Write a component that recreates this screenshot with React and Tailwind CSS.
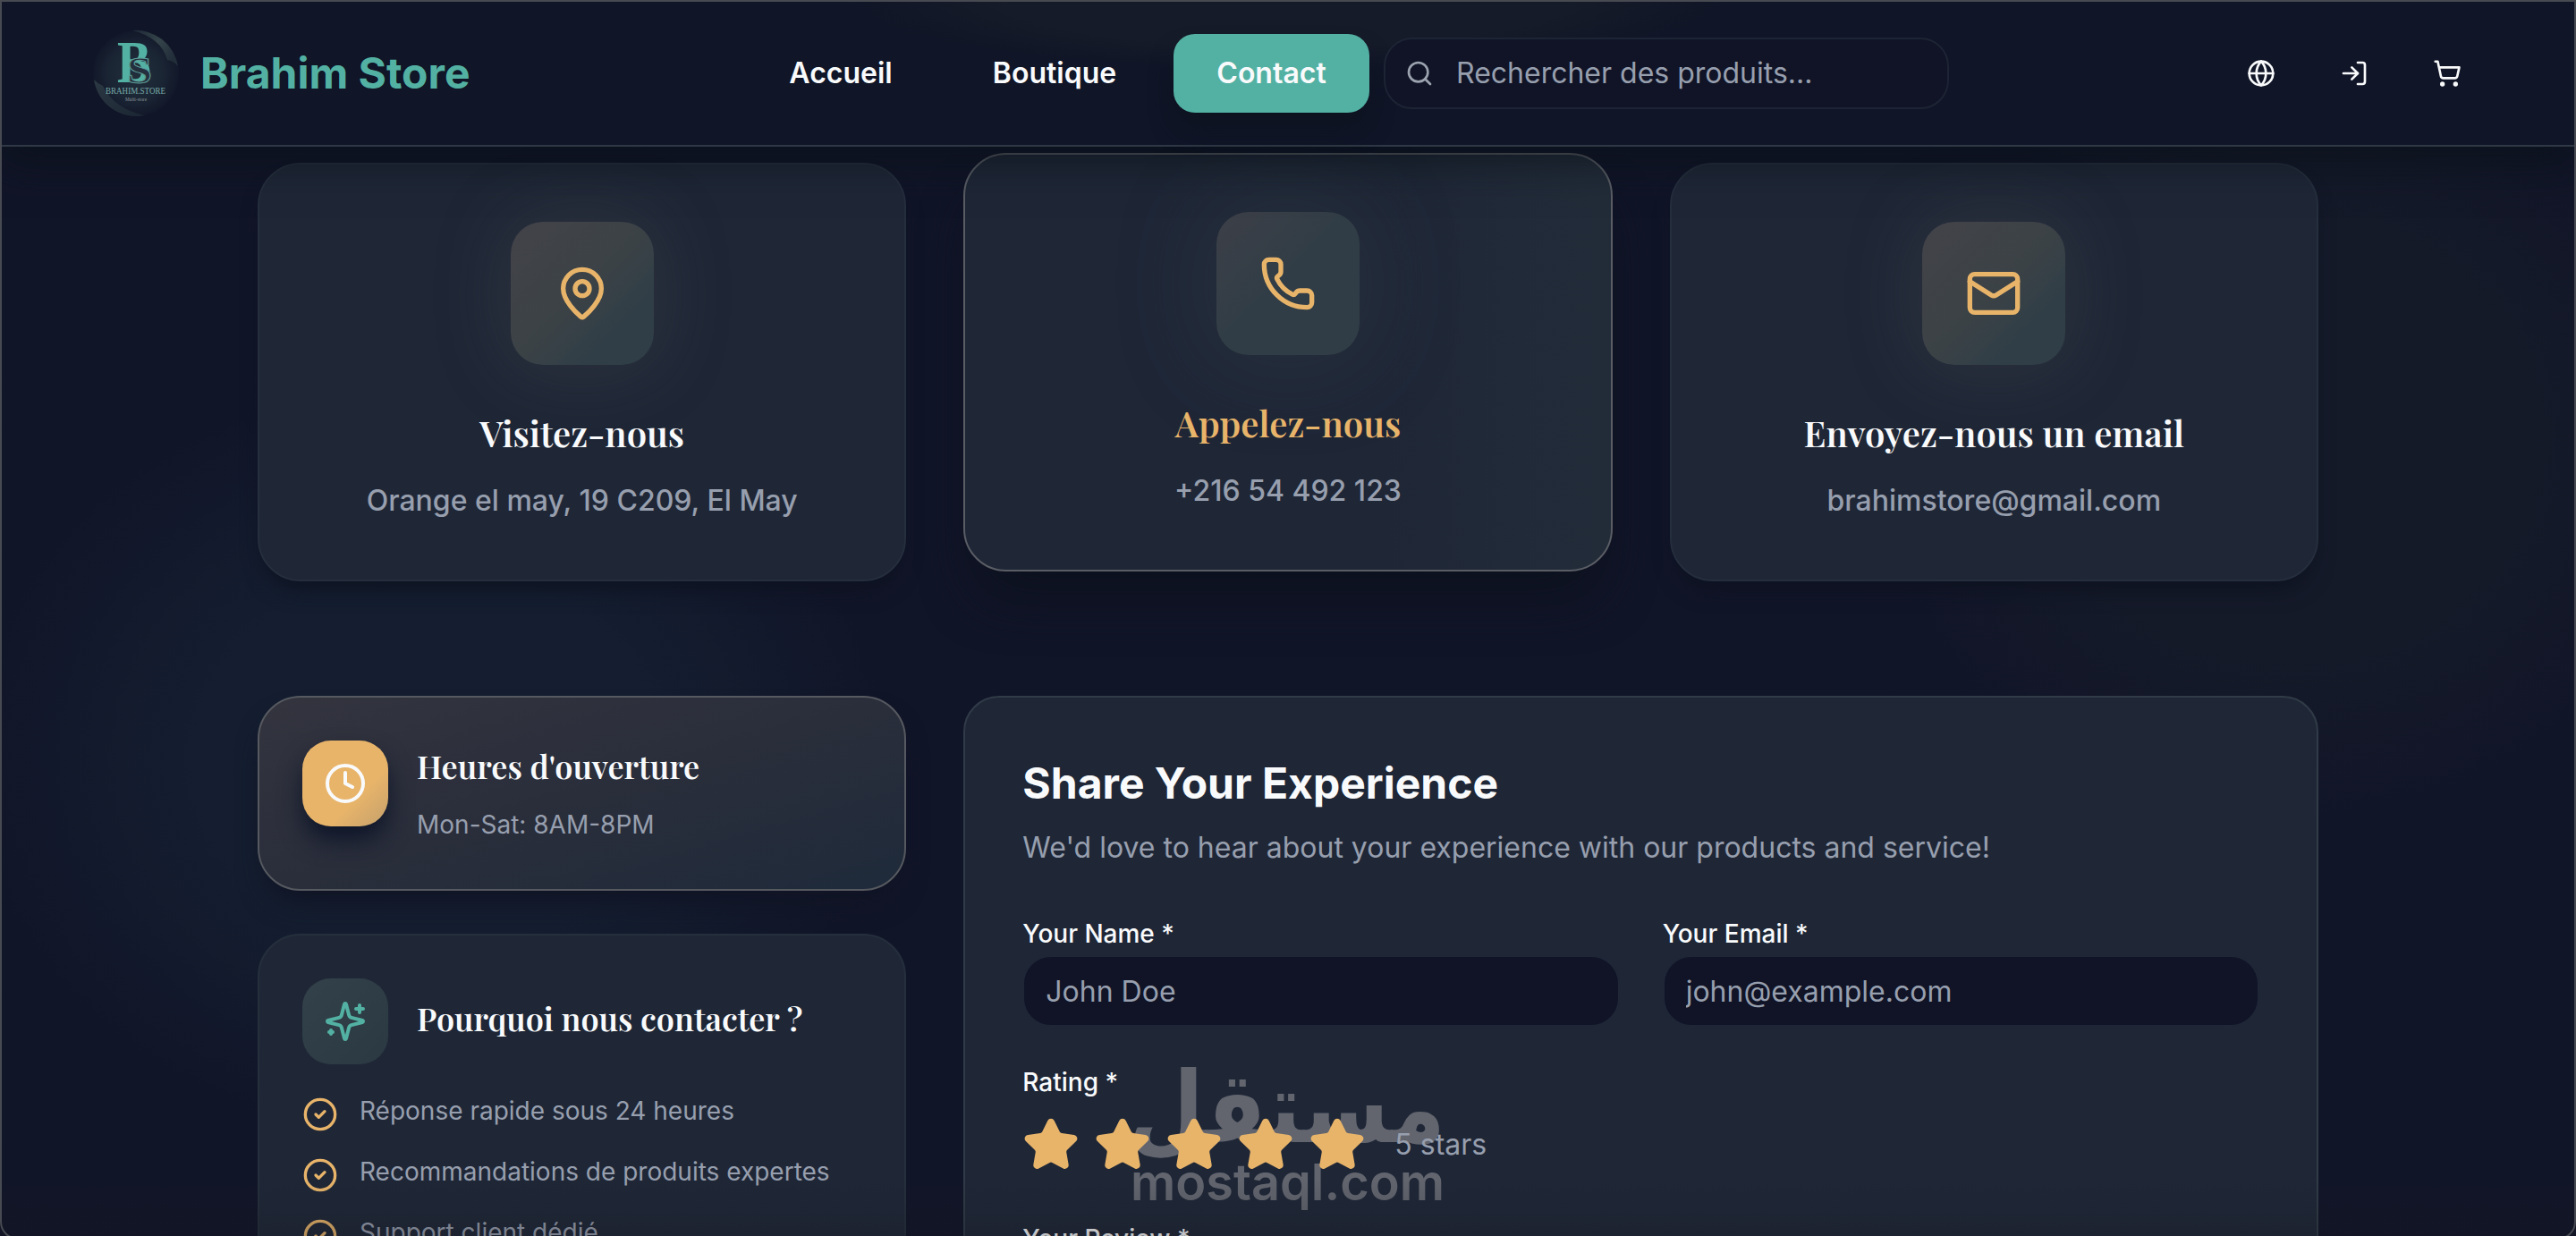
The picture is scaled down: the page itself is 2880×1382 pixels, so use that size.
import { useState } from "react";
import {
  Search,
  Globe,
  LogIn,
  ShoppingCart,
  MapPin,
  Phone,
  Mail,
  Clock,
  CircleCheck,
} from "lucide-react";

const contactCards = [
  { title: "Visitez-nous", text: "Orange el may, 19 C209, El May", icon: MapPin },
  { title: "Appelez-nous", text: "+216 54 492 123", icon: Phone, active: true },
  { title: "Envoyez-nous un email", text: "brahimstore@gmail.com", icon: Mail },
];

const reasons = [
  "Réponse rapide sous 24 heures",
  "Recommandations de produits expertes",
  "Support client dédié",
];

function Sparkles({ className }) {
  return (
    <svg
      viewBox="0 0 24 24"
      fill="none"
      stroke="currentColor"
      strokeWidth="2"
      strokeLinecap="round"
      strokeLinejoin="round"
      className={className}
    >
      <path d="M9.937 15.5A2 2 0 0 0 8.5 14.063l-6.135-1.582a.5.5 0 0 1 0-.962L8.5 9.936A2 2 0 0 0 9.937 8.5l1.582-6.135a.5.5 0 0 1 .963 0L14.063 8.5A2 2 0 0 0 15.5 9.937l6.135 1.581a.5.5 0 0 1 0 .964L15.5 14.063a2 2 0 0 0-1.437 1.437l-1.582 6.135a.5.5 0 0 1-.963 0z" />
      <path d="M20 3v4M22 5h-4M4 17v2M5 18H3" />
    </svg>
  );
}

function Logo() {
  return (
    <svg viewBox="0 0 96 96" className="size-24 overflow-visible">
      <defs>
        <radialGradient id="disc">
          <stop offset="0" stopColor="#222e3b" />
          <stop offset="0.6" stopColor="#1b2635" />
          <stop offset="1" stopColor="#121829" />
        </radialGradient>
        <linearGradient id="rimTop" x1="0" y1="0" x2="1" y2="0.6">
          <stop offset="0" stopColor="#1d2936" />
          <stop offset="0.55" stopColor="#34434a" />
          <stop offset="1" stopColor="#222e3a" />
        </linearGradient>
        <linearGradient id="rimBottom" x1="0" y1="0" x2="1" y2="1">
          <stop offset="0" stopColor="#2b3943" />
          <stop offset="1" stopColor="#1b2533" />
        </linearGradient>
      </defs>
      <circle cx="48" cy="48" r="48" fill="url(#disc)" />
      {/* light catching the rim */}
      <path d="M44 0A48 48 0 0 1 95 40Q90 34 83 33Q76 8 44 0Z" fill="url(#rimTop)" />
      <path d="M1 55A48 48 0 0 0 58 95Q24 88 11 62Q6 60 1 55Z" fill="url(#rimBottom)" />
      <text x="27" y="58" fontSize="67" fill="#53b1a3" textLength="38" lengthAdjust="spacingAndGlyphs" className="font-['Liberation_Serif',serif] font-bold">B</text>
      <text x="38" y="59" fontSize="42" fill="#24303d" stroke="#5c9c98" strokeWidth="1" textLength="28" lengthAdjust="spacingAndGlyphs" className="font-['Liberation_Serif',serif] font-bold">S</text>
      <text x="14" y="71" fontSize="10" fill="#78aaa8" textLength="67" lengthAdjust="spacingAndGlyphs" className="font-['Liberation_Serif',serif]">BRAHIM.STORE</text>
      <text x="36" y="79" fontSize="5.5" fill="#8d989d" textLength="24" lengthAdjust="spacingAndGlyphs" className="font-['Liberation_Serif',serif]">Multi-store</text>
    </svg>
  );
}

function Header() {
  return (
    <header className="relative z-20 h-[164px] border-b-2 border-[#2f3945] bg-[#101527] px-[104px] pt-0.5 shadow-[0_20px_40px_rgba(10,16,24,0.6)]">
      {/* soft glow under the top edge */}
      <div className="absolute left-[940px] top-0 h-20 w-[1000px] bg-radial-[at_50%_0%] from-[#161b29] from-45% to-[#101527] to-70%" />
      <div className="relative flex h-40 items-center">
        <Logo />
        <div className="ml-6 w-[610px] text-5xl font-bold text-[#53b1a3]">
          Brahim Store
        </div>
        <nav className="flex items-center gap-4 text-[32px] font-semibold leading-[48px] text-gray-50">
          <a className="w-[212px] py-5 text-center">Accueil</a>
          <a className="w-[234px] py-5 text-center">Boutique</a>
          <a className="w-[219px] rounded-3xl bg-[#53b1a3] py-5 text-center shadow-[0_20px_30px_-6px_#0d131e]">
            Contact
          </a>
        </nav>
        <div className="ml-4 flex h-20 w-[632px] items-center gap-6 rounded-[32px] border-2 border-[#1d2434] bg-[#101426] pl-[22px]">
          <Search className="size-8 text-[#9ca3af]" />
          <input
            className="ml-px w-[500px] bg-transparent text-[32px] outline-none placeholder:text-[#979fae]"
            placeholder="Rechercher des produits..."
          />
        </div>
        <div className="ml-auto flex gap-6 text-gray-50">
          <button className="grid size-20 place-items-center"><Globe className="size-8" /></button>
          <button className="grid size-20 place-items-center"><LogIn className="size-8" /></button>
          <button className="grid size-20 place-items-center"><ShoppingCart className="size-8" /></button>
        </div>
      </div>
    </header>
  );
}

function ContactCard({ card }) {
  const Icon = card.icon;
  return (
    <div
      className={`flex h-[468px] flex-col items-center rounded-[48px] border-2 pt-16 ${
        card.active
          ? "-translate-y-[11px] border-[#5a5d64] bg-linear-to-r from-[#1f2737] from-65% to-[#222c39] shadow-[0_40px_60px_-16px_#0c111d]"
          : "border-[#252e3d] bg-[#1f2737] shadow-[0_16px_24px_-8px_#0d1220]"
      }`}
    >
      <div
        className={`grid size-40 place-items-center rounded-[36px] ${
          card.active
            ? "bg-linear-to-br from-[#3d3f47] to-[#303d46] to-50% shadow-[0_0_100px_10px_rgba(60,75,80,0.28)]"
            : "bg-linear-to-br from-[#434349] via-[#3b4246] to-[#303e47] to-75% shadow-[0_0_80px_4px_rgba(78,78,76,0.32)]"
        }`}
      >
        <Icon className="size-16 text-[#e8b46a]" />
      </div>
      <h3
        className={`mt-12 font-['Playfair_Display','Liberation_Serif',serif] text-[40px] font-semibold leading-[56px] ${
          card.active ? "text-[#e8b46a]" : "text-gray-50"
        }`}
      >
        {card.title}
      </h3>
      <p className="mt-6 text-[32px] font-medium leading-[48px] text-[#979fae]">{card.text}</p>
    </div>
  );
}

function Field({ label, placeholder }) {
  return (
    <label className="block text-[28px] font-medium leading-10 text-gray-50">
      {label}
      <input
        placeholder={placeholder}
        className="mt-1 block h-20 w-full rounded-[32px] border-2 border-[#1f2737] bg-[#101426] px-6 text-[32px] font-normal outline-none placeholder:text-[#979fae]"
      />
    </label>
  );
}

function Watermark() {
  return (
    <svg
      viewBox="0 0 350 170"
      className="pointer-events-none absolute left-[186px] top-[410px] h-[170px] w-[350px] overflow-visible fill-[#62656e]"
    >
      <text x="351" y="87" fontSize="110" textLength="354" lengthAdjust="spacingAndGlyphs" direction="rtl" className="font-['DejaVu_Sans',sans-serif] font-bold">
        مستقل
      </text>
      <text x="-1" y="152" fontSize="56" textLength="351" lengthAdjust="spacingAndGlyphs" className="font-['Inter',sans-serif] font-semibold">
        mostaql.com
      </text>
    </svg>
  );
}

function ReviewForm() {
  const [rating, setRating] = useState(5);
  return (
    <div className="relative col-span-2 h-[760px] rounded-[40px] border-2 border-[#303b47] bg-[#1f2737] px-16 pt-16">
      <Watermark />
      <h2 className="text-5xl font-bold leading-[64px] text-gray-50">
        Share Your Experience
      </h2>
      <p className="mt-4 text-[32px] leading-[48px] text-[#979fae]">
        We'd love to hear about your experience with our products and service!
      </p>
      <div className="mt-[52px] grid grid-cols-2 gap-12">
        <Field label="Your Name *" placeholder="John Doe" />
        <Field label="Your Email *" placeholder="john@example.com" />
      </div>
      <div className="relative mt-[42px] text-[28px] font-medium leading-10 text-gray-50">Rating *</div>
      <div className="relative mt-[18px] flex items-center gap-4">
        {[1, 2, 3, 4, 5].map((star) => (
          <button key={star} onClick={() => setRating(star)}>
            <svg viewBox="0 0 24 24" className="size-16 fill-[#e8b46a] stroke-[#e8b46a] stroke-2" strokeLinejoin="round">
              <path d="M11.525 2.295a.53.53 0 0 1 .95 0l2.31 4.679a2.123 2.123 0 0 0 1.595 1.16l5.166.756a.53.53 0 0 1 .294.904l-3.736 3.638a2.123 2.123 0 0 0-.611 1.878l.882 5.14a.53.53 0 0 1-.771.56l-4.618-2.428a2.122 2.122 0 0 0-1.973 0L6.396 21.01a.53.53 0 0 1-.77-.56l.881-5.139a2.122 2.122 0 0 0-.611-1.879L2.16 9.795a.53.53 0 0 1 .294-.906l5.165-.755a2.122 2.122 0 0 0 1.597-1.16z" />
            </svg>
          </button>
        ))}
        <span className="ml-4 text-[32px] text-[#979fae]">{rating} stars</span>
      </div>
      <div className="mt-[53px] text-[28px] font-medium leading-10 text-gray-50">Your Review *</div>
    </div>
  );
}

function Sidebar() {
  return (
    <div className="flex flex-col gap-12">
      {/* Opening hours */}
      <div className="flex h-[217.5px] gap-8 rounded-[48px] border-2 border-[#56595f] bg-linear-to-br from-[#33343e] via-[#2a2e3b] to-[#1e2a3a] p-12 shadow-[0_20px_30px_-8px_#101424]">
        <div className="grid size-24 place-items-center rounded-[32px] bg-linear-to-br from-[#e8b46a] from-65% to-[#c4a06b] shadow-[0_16px_28px_-2px_#0c1428]">
          <Clock className="size-12 text-gray-50" />
        </div>
        <div>
          <h3 className="font-['Playfair_Display','Liberation_Serif',serif] text-4xl font-semibold leading-[56px] text-gray-50">
            Heures d'ouverture
          </h3>
          <p className="mt-4 text-[28px] leading-[45.5px] text-[#979fae]">Mon-Sat: 8AM-8PM</p>
        </div>
      </div>

      {/* Why contact us */}
      <div className="h-[500px] rounded-[48px] border-2 border-[#252f3c] bg-[#1f2737] p-12">
        <div className="flex items-center gap-8">
          <div className="grid size-24 place-items-center rounded-[32px] bg-linear-to-br from-[#33424a] to-[#2a3942]">
            <Sparkles className="size-12 text-[#53b1a3]" />
          </div>
          <h3 className="-mt-2 font-['Playfair_Display','Liberation_Serif',serif] text-4xl font-semibold leading-[56px] text-gray-50">
            Pourquoi nous contacter ?
          </h3>
        </div>
        <ul className="mt-8 flex flex-col gap-6">
          {reasons.map((reason) => (
            <li key={reason} className="flex h-11 gap-6">
              <CircleCheck className="mt-1 size-10 text-[#e8b46a]" />
              <span className="text-[28px] leading-10 text-[#979fae]">{reason}</span>
            </li>
          ))}
        </ul>
      </div>
    </div>
  );
}

export default function App() {
  return (
    <div className="relative h-[1382px] w-[2880px] overflow-hidden bg-[#111528] font-['Inter',sans-serif]">
      {/* background blobs */}
      <div className="absolute left-[-40px] top-[420px] h-[860px] w-[1040px] bg-radial from-[#141e30] from-35% to-[#111528] to-70%" />
      <div className="absolute left-[2080px] top-[60px] h-[860px] w-[960px] bg-radial from-[#151a29] from-40% to-[#111528] to-70%" />

      <Header />

      <main className="relative mx-auto w-[2304px] pt-[18px]">
        <div className="grid grid-cols-3 gap-16">
          {contactCards.map((card) => (
            <ContactCard key={card.title} card={card} />
          ))}
        </div>
        <div className="mt-32 grid grid-cols-3 gap-16">
          <Sidebar />
          <ReviewForm />
        </div>
      </main>

      {/* shade at the bottom and the window frame */}
      <div className="pointer-events-none absolute inset-x-0 bottom-0 z-30 h-16 bg-linear-to-b from-transparent to-[#15161c]/25" />
      <div className="pointer-events-none absolute inset-x-0 -bottom-1 top-0 z-30 rounded-b-[20px] border-2 border-[#474a50]" />
    </div>
  );
}
